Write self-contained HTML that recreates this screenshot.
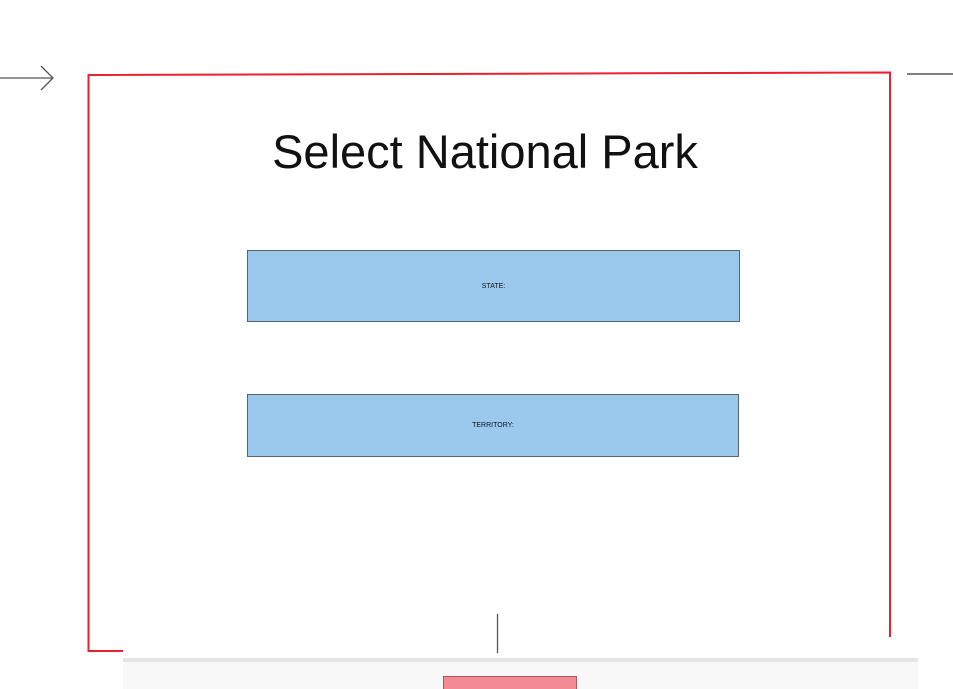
<!DOCTYPE html>
<html><head><style>
body{margin:0;width:953px;height:689px;background:#fff;position:relative;overflow:hidden;font-family:"Liberation Sans",sans-serif}
.a{position:absolute}
.box{position:absolute;background:#9bc9ee;border:1px solid #5a6470;box-sizing:border-box;display:flex;align-items:center;justify-content:center;font-size:7px;color:#111}
</style></head><body>
<svg class="a" style="left:0;top:0" width="953" height="689">
<line x1="0" y1="78" x2="53" y2="78" stroke="#555" stroke-width="1.3"/>
<polyline points="41,66 53,78 41,90" fill="none" stroke="#555" stroke-width="1.3"/>
<line x1="907" y1="74" x2="953" y2="74" stroke="#333" stroke-width="1.2"/>
<polyline points="123,651 88.5,651 88.5,75 890,72.5 890,637" fill="none" stroke="#e8202f" stroke-width="2"/>
<line x1="497.5" y1="614" x2="497.5" y2="653" stroke="#555" stroke-width="1.3"/>
</svg>
<div class="a" style="left:123px;top:658px;width:795px;height:31px;background:#f8f8f8"></div>
<div class="a" style="left:123px;top:658px;width:795px;height:4px;background:#e5e5e5"></div>
<div class="a" style="left:443px;top:676px;width:134px;height:13px;background:#f28b93;border:1px solid #b05560;border-bottom:none;box-sizing:border-box"></div>
<div class="a" style="left:185px;top:124px;width:600px;text-align:center;font-size:47px;line-height:56px;color:#111">Select National Park</div>
<div class="box" style="left:247px;top:250px;width:493px;height:72px">STATE:</div>
<div class="box" style="left:247px;top:394px;width:492px;height:63px">TERRITORY:</div>
</body></html>
